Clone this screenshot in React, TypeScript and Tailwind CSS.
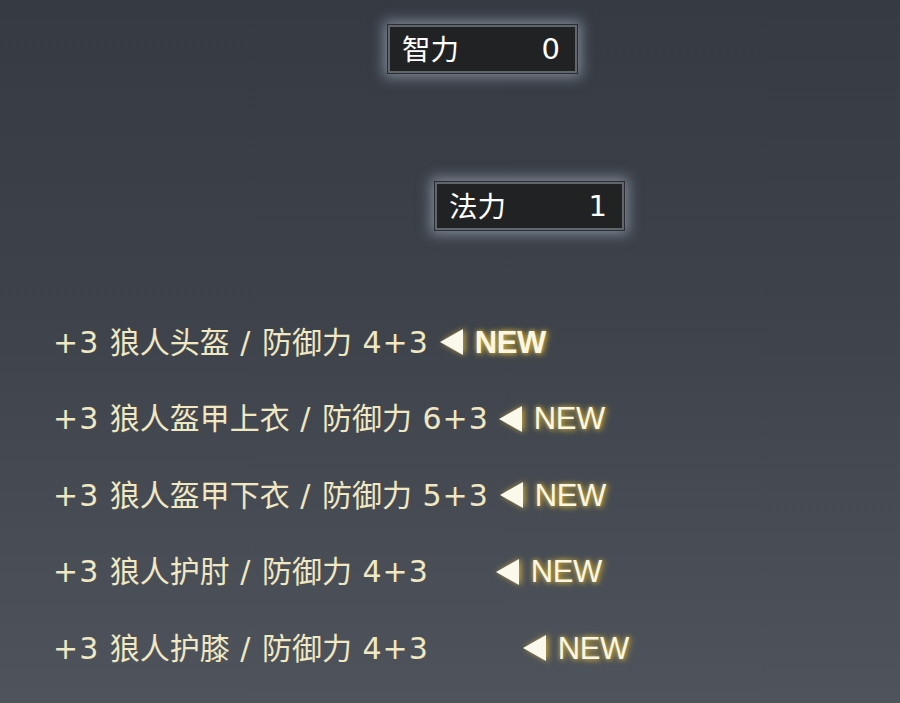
import React from "react";

const rows = [
  { name: "+3 狼人头盔 / 防御力 4+3", gap: "ml-[10px]", bold: true },
  { name: "+3 狼人盔甲上衣 / 防御力 6+3", gap: "ml-[9px]", bold: false },
  { name: "+3 狼人盔甲下衣 / 防御力 5+3", gap: "ml-[10px]", bold: false },
  { name: "+3 狼人护肘 / 防御力 4+3", gap: "ml-[66px]", bold: false },
  { name: "+3 狼人护膝 / 防御力 4+3", gap: "ml-[93px]", bold: false },
];

const cjk = "font-['Noto_Sans','Noto_Sans_CJK_SC',sans-serif]";

// the game's latin glyphs are wide, so latin runs use DejaVu Sans
function ItemName({ text }: { text: string }) {
  const parts = text.split(/([\u4e00-\u9fff]+)/).filter(Boolean);
  return (
    <span className={`${cjk} whitespace-pre text-[30px] leading-none text-[#f0e7c3]`}>
      {parts.map((p, i) =>
        /[\u4e00-\u9fff]/.test(p) ? (
          <span key={i}>{p}</span>
        ) : (
          <span key={i} className="font-['DejaVu_Sans',sans-serif] tracking-[1px]">
            {p}
          </span>
        )
      )}
    </span>
  );
}

function StatBox({ label, value, className }: { label: string; value: string; className: string }) {
  return (
    <div
      className={`${className} flex h-[48px] w-[189px] items-center justify-between border-2 border-[#61666d] bg-[#212224] pl-[12px] pr-[15px] shadow-[0_0_0_1px_#2a2e33,0_0_12px_4px_rgba(195,210,230,0.5)]`}
    >
      <span className={`${cjk} text-[28.5px] leading-none text-white`}>{label}</span>
      <span className="font-['DejaVu_Sans',sans-serif] text-[29px] leading-none text-white">{value}</span>
    </div>
  );
}

function NewTag({ bold }: { bold: boolean }) {
  return (
    <span className="flex items-center gap-[10px]">
      <svg width="26" height="28" viewBox="0 0 26 28" className="drop-shadow-[2px_0_3px_rgba(214,180,60,0.9)]">
        <path d="M1 14 L24 1 L24 27 Z" fill="#fbf8ec" />
      </svg>
      <span
        className={`font-['Liberation_Sans',Arial,sans-serif] text-[31px] leading-none text-[#fbf6e2] [text-shadow:0_0_5px_rgba(214,182,70,0.95),2px_1px_6px_rgba(190,160,50,0.8)] ${bold ? "font-bold tracking-[-0.5px]" : "font-normal tracking-[-0.5px]"}`}
      >
        NEW
      </span>
    </span>
  );
}

export default function App() {
  return (
    <div className="flex h-[703px] w-[900px] flex-col overflow-hidden bg-[linear-gradient(180deg,#363b43_0%,#3e434b_45%,#4f545c_100%)]">
      <StatBox label="智力" value="0" className="ml-[388px] mt-[25px]" />
      <StatBox label="法力" value="1" className="ml-[435px] mt-[109px]" />

      <div className="mt-[74px] flex flex-col pl-[53px]">
        {rows.map((r) => (
          <div key={r.name} className="flex h-[76.5px] items-center">
            <ItemName text={r.name} />
            <span className={r.gap}>
              <NewTag bold={r.bold} />
            </span>
          </div>
        ))}
      </div>
    </div>
  );
}
